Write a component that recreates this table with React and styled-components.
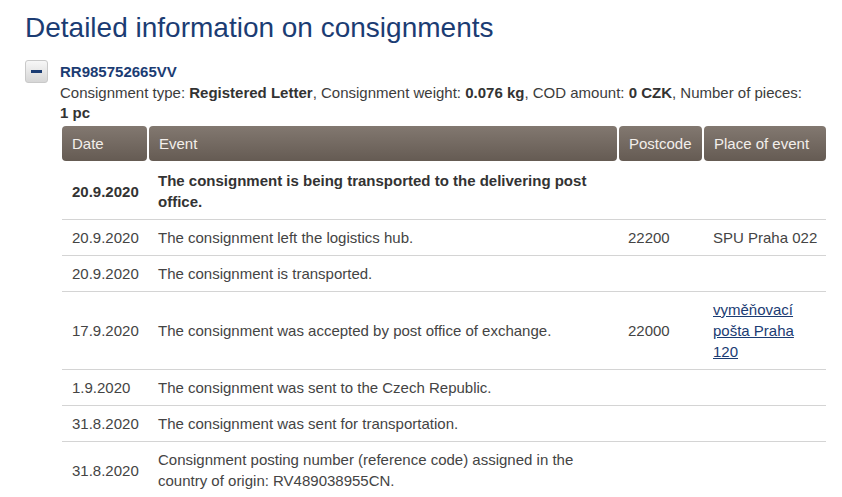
import React from 'react';
import styled, { createGlobalStyle } from 'styled-components';

const GlobalStyle = createGlobalStyle`
  html, body {
    margin: 0;
    padding: 0;
    background: #ffffff;
  }
  body {
    font-family: "Liberation Sans", Arial, sans-serif;
    color: #3c3c3c;
  }
`;

const events = [
  {
    date: '20.9.2020',
    text: 'The consignment is being transported to the delivering post office.',
    bold: true
  },
  {
    date: '20.9.2020',
    text: 'The consignment left the logistics hub.',
    postcode: '22200',
    place: 'SPU Praha 022'
  },
  { date: '20.9.2020', text: 'The consignment is transported.' },
  {
    date: '17.9.2020',
    text: 'The consignment was accepted by post office of exchange.',
    postcode: '22000',
    place: 'vyměňovací pošta Praha 120',
    link: true
  },
  { date: '1.9.2020', text: 'The consignment was sent to the Czech Republic.' },
  { date: '31.8.2020', text: 'The consignment was sent for transportation.' },
  {
    date: '31.8.2020',
    text: 'Consignment posting number (reference code) assigned in the country of origin: RV489038955CN.'
  }
];

const App = () => {
  return (
    <Page>
      <GlobalStyle />
      <Title>Detailed information on consignments</Title>
      <Consignment>
        <ToggleButton aria-label="collapse">
          <MinusBar />
        </ToggleButton>
        <Details>
          <Code>RR985752665VV</Code>
          <Summary>
            Consignment type: <b>Registered Letter</b>, Consignment weight:{' '}
            <b>0.076 kg</b>, COD amount: <b>0 CZK</b>, Number of pieces:{' '}
            <Pieces>1 pc</Pieces>
          </Summary>
          <Table>
            <HeadRow>
              <HeadCell>Date</HeadCell>
              <HeadCell>Event</HeadCell>
              <HeadCell>Postcode</HeadCell>
              <HeadCell>Place of event</HeadCell>
            </HeadRow>
            <Body>
              {events.map((ev, i) => (
                <Row key={i} $bold={ev.bold}>
                  <Cell>{ev.date}</Cell>
                  <Cell>{ev.text}</Cell>
                  <Cell>{ev.postcode}</Cell>
                  <Cell>
                    {ev.link ? <PlaceLink href="#">{ev.place}</PlaceLink> : ev.place}
                  </Cell>
                </Row>
              ))}
            </Body>
          </Table>
        </Details>
      </Consignment>
    </Page>
  );
};

const Page = styled.div`
  padding: 0 0 0 25px;
  width: 842px;
  box-sizing: border-box;
`;

const Title = styled.h1`
  margin: 0;
  padding-top: 11px;
  font-size: 28px;
  line-height: 34px;
  font-weight: normal;
  color: #1b3c73;
`;

const Consignment = styled.div`
  display: flex;
  align-items: flex-start;
  gap: 12px;
  margin-top: 15px;
`;

const ToggleButton = styled.button`
  flex: none;
  width: 23px;
  height: 23px;
  margin: 0;
  padding: 0;
  display: flex;
  align-items: center;
  justify-content: center;
  border: 1px solid #c9c9c9;
  border-radius: 3px;
  background: linear-gradient(#f7f7f7, #d6d6d6);
  cursor: pointer;
`;

const MinusBar = styled.span`
  display: block;
  width: 11px;
  height: 3px;
  background: #1b3c73;
`;

const Details = styled.div`
  width: 768px;
  margin-top: 2px;
`;

const Code = styled.div`
  font-size: 15px;
  line-height: 20px;
  margin-bottom: 1px;
  font-weight: bold;
  color: #1b3c73;
`;

const Summary = styled.div`
  font-size: 15px;
  line-height: 20px;
  color: #3c3c3c;
  b {
    color: #333333;
  }
`;

const Pieces = styled.b`
  white-space: nowrap;
`;

const Table = styled.div`
  width: 764px;
  margin: 3px 0 0 2px;
  font-size: 15px;
  line-height: 21px;
`;

const columns = `85px 468px 83px 122px`;

const HeadRow = styled.div`
  display: grid;
  grid-template-columns: ${columns};
  column-gap: 2px;
`;

const HeadCell = styled.div`
  padding: 7px 4px 7px 10px;
  border-radius: 4px;
  background: linear-gradient(#827870, #655b53);
  color: #f3efeb;
  white-space: nowrap;
`;

const Body = styled.div`
  margin-top: 2px;
`;

const Row = styled.div`
  display: grid;
  grid-template-columns: ${columns};
  column-gap: 2px;
  align-items: center;
  border-bottom: 1px solid #d4d4d4;
  font-weight: ${p => (p.$bold ? 'bold' : 'normal')};
  color: ${p => (p.$bold ? '#333333' : '#444444')};
  &:last-child {
    border-bottom: none;
  }
`;

const Cell = styled.div`
  padding: 7px 4px 7px 9px;
  &:first-child {
    padding-left: 10px;
  }
  &:nth-child(2) {
    padding-right: 30px;
  }
`;

const PlaceLink = styled.a`
  color: #1b3c73;
  text-decoration: underline;
`;

export default App;
